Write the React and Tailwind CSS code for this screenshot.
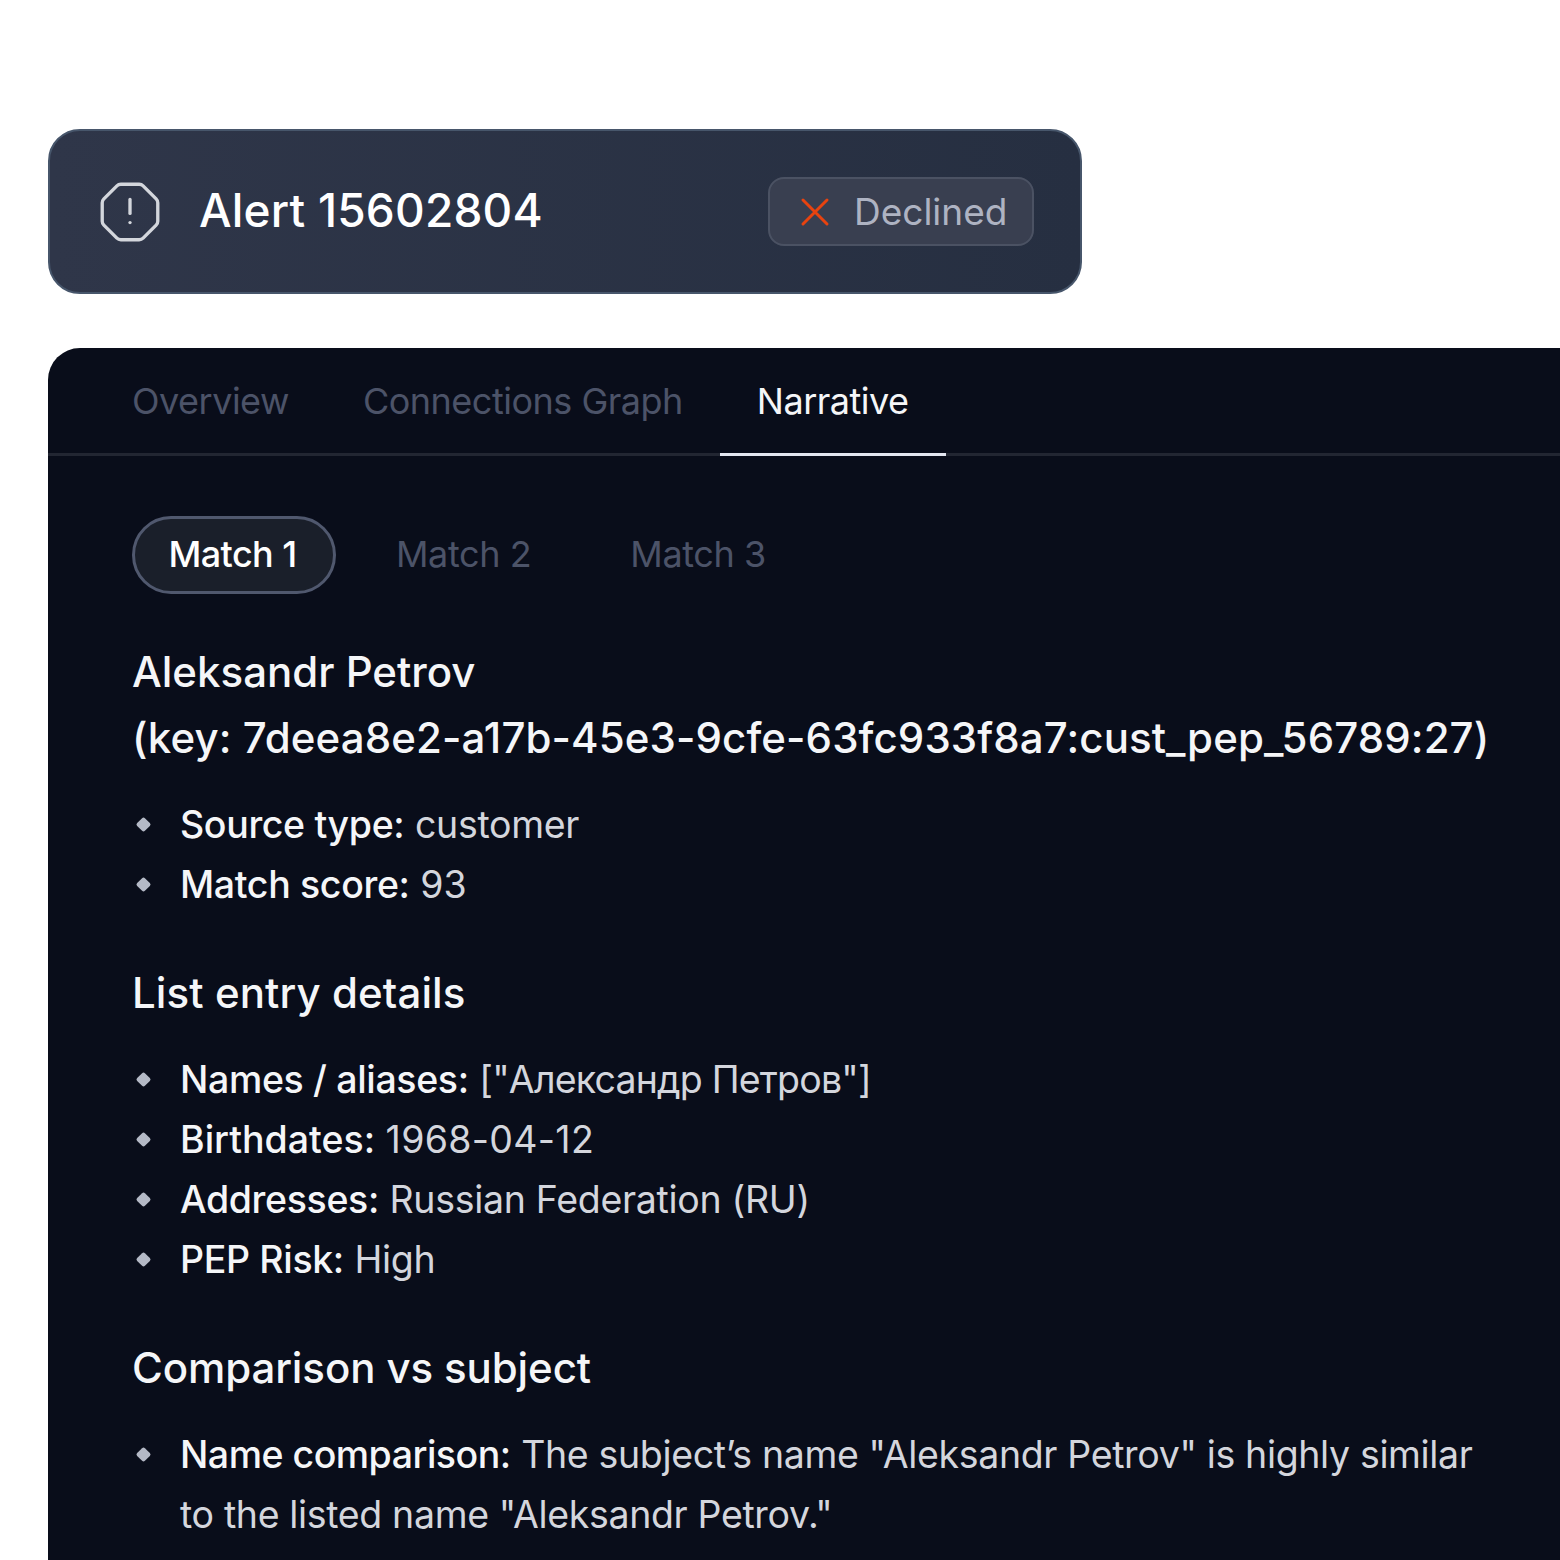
const bullet = 'relative pl-12 before:absolute before:left-[6px] before:top-[24px] before:size-[11px] before:rotate-45 before:rounded-[2px] before:bg-[#b4b9c6]'

function Item({ label, labelClass = 'tracking-[-0.35px]', valueClass = 'tracking-[-0.3px]', children }) {
  return (
    <li className={bullet}>
      <span className={`font-[450] text-[#f5f6f8] ${labelClass}`}>{label}</span>{' '}
      <span className={valueClass}>{children}</span>
    </li>
  )
}

export default function App() {
  return (
    <div className="h-[1560px] overflow-hidden bg-white pt-[129px] pl-12 font-['Inter',sans-serif]">
      <div className="flex h-[165px] w-[1034px] items-center justify-between rounded-[32px] border-2 border-[#47566b] bg-gradient-to-r from-[#2f3649] to-[#262f41] pr-[46px] pl-[50px]">
        <div className="flex items-center gap-[39px]">
          <svg width="60" height="60" viewBox="1.2 1.2 21.6 21.6" fill="none" stroke="#d3d6dc" strokeWidth="1.2" strokeLinecap="round" strokeLinejoin="round">
            <path d="M2.586 16.726A2 2 0 0 1 2 15.312V8.688a2 2 0 0 1 .586-1.414l4.688-4.688A2 2 0 0 1 8.688 2h6.624a2 2 0 0 1 1.414.586l4.688 4.688A2 2 0 0 1 22 8.688v6.624a2 2 0 0 1-.586 1.414l-4.688 4.688a2 2 0 0 1-1.414.586H8.688a2 2 0 0 1-1.414-.586z" />
            <path d="M12 7.500v5" />
            <path d="M12 15.800h.01" strokeWidth="1.200" />
          </svg>
          <h1 className="-mt-[3px] text-[46px] leading-none font-medium tracking-[0.2px] text-white">Alert 15602804</h1>
        </div>
        <div className="flex h-[69px] w-[266px] items-center gap-[24px] rounded-2xl border-2 border-[#4b5263] bg-[#393f50] pl-[30px] text-[37px] text-[#aeb3c2]">
          <svg width="30" height="30" viewBox="0 0 30 30" fill="none" stroke="#e8430f" strokeWidth="3" strokeLinecap="round" className="shrink-0">
            <path d="M3 3l24 24M27 3L3 27" />
          </svg>
          Declined
        </div>
      </div>

      <div className="mt-[54px] h-[1300px] rounded-tl-[32px] bg-[#090d1a]">
        <div className="flex h-[108px] border-b-[3px] border-[#222632] pl-[47px] text-[36px] tracking-[-0.5px] text-[#4c5368]">
          <div className="flex items-center px-[37px]">Overview</div>
          <div className="flex items-center px-[37px]">Connections Graph</div>
          <div className="-mb-[3px] flex items-center border-b-[3px] border-[#e3e6f0] px-[37px] text-[#f5f6f8]">Narrative</div>
        </div>

        <div className="pt-[60px] pl-[84px] text-[37.500px] leading-[60px] text-[#d4d6dd]">
          <div className="flex items-center gap-[24px] text-[36px] tracking-[-0.4px] text-[#4c5368]">
            <div className="flex h-[78px] w-[204px] items-center justify-center rounded-full border-[3px] border-[#50586e] bg-[#1a1f2a] pr-[3px] pb-[2px] font-[450] tracking-[-0.6px] text-white">Match 1</div>
            <div className="pr-[37px] pb-[2px] pl-[36px]">Match 2</div>
            <div className="pr-[39px] pb-[2px] pl-[38px]">Match 3</div>
          </div>

          <h2 className="mt-[45px] text-[42px] leading-[66px] font-[450] text-[#f5f6f8]">
            Aleksandr Petrov
            <br />
            <span className="tracking-[0.1px]">(key: 7deea8e2-a17b-45e3-9cfe-63fc933f8a7:cust_pep_56789:27)</span>
          </h2>
          <ul className="mt-[24px]">
            <Item label="Source type:">customer</Item>
            <Item label="Match score:" valueClass="tracking-normal">93</Item>
          </ul>

          <h2 className="mt-[45px] text-[42px] leading-[66px] font-[450] tracking-[0.1px] text-[#f5f6f8]">List entry details</h2>
          <ul className="mt-[24px]">
            <Item label="Names / aliases:" valueClass="tracking-[-0.8px]">["Александр Петров"]</Item>
            <Item label="Birthdates:" labelClass="tracking-normal" valueClass="tracking-[0.3px]">1968-04-12</Item>
            <Item label="Addresses:">Russian Federation (RU)</Item>
            <Item label="PEP Risk:">High</Item>
          </ul>

          <h2 className="mt-[45px] text-[42px] leading-[66px] font-[450] tracking-[-0.1px] text-[#f5f6f8]">Comparison vs subject</h2>
          <ul className="mt-[24px] w-[1360px]">
            <Item label="Name comparison:" labelClass="tracking-[-0.5px]" valueClass="tracking-[-0.35px]">The subject’s name "Aleksandr Petrov" is highly similar to the listed name "Aleksandr Petrov."</Item>
          </ul>
        </div>
      </div>
    </div>
  )
}
